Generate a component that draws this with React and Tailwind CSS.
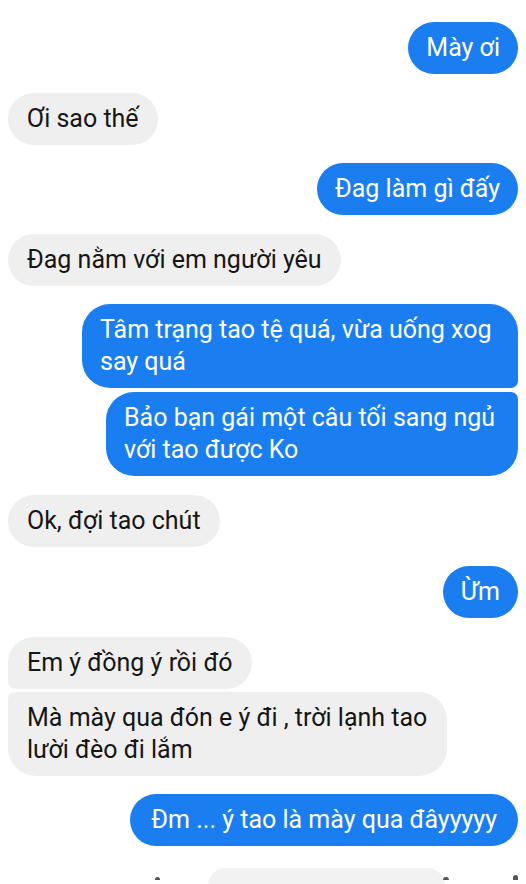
const font = { fontFamily: 'Roboto, "Noto Sans", sans-serif' };

function Sent({ children, className = '', mt = 'mt-[19px]' }) {
  return (
    <div className={`flex justify-end ${mt}`}>
      <div
        className={`bg-[#1b7ef0] text-white text-[25px] leading-[32px] py-[10px] px-[18px] ${className}`}
      >
        {children}
      </div>
    </div>
  );
}

function Received({ children, className = '', mt = 'mt-[19px]' }) {
  return (
    <div className={`flex justify-start ${mt}`}>
      <div
        className={`bg-[#efefef] text-[#161616] text-[25px] leading-[32px] py-[10px] px-[19px] ${className}`}
      >
        {children}
      </div>
    </div>
  );
}

export default function App() {
  return (
    <div className="w-[526px] h-[884px] overflow-hidden bg-white px-2 pt-[22px]" style={font}>
      <Sent mt="mt-0" className="rounded-[26px] px-[17px]">Mày ơi</Sent>
      <Received className="rounded-[26px]">Ơi sao thế</Received>
      <Sent mt="mt-[18px]" className="rounded-[26px]">Đag làm gì đấy</Sent>
      <Received className="rounded-[26px]">Đag nằm với em người yêu</Received>

      <Sent mt="mt-[18px]" className="w-[436px] rounded-[28px] rounded-br-[7px]">
        Tâm trạng tao tệ quá, vừa uống xog
        <br />
        say quá
      </Sent>
      <Sent mt="mt-[4px]" className="w-[412px] rounded-[28px] rounded-tr-[7px]">
        Bảo bạn gái một câu tối sang ngủ
        <br />
        với tao được Ko
      </Sent>

      <Received className="rounded-[26px]">Ok, đợi tao chút</Received>
      <Sent className="rounded-[26px] px-[17px]">Ừm</Sent>

      <Received className="rounded-[26px] rounded-bl-[7px]">Em ý đồng ý rồi đó</Received>
      <Received mt="mt-[3px]" className="w-[439px] rounded-[28px] rounded-tl-[7px]">
        Mà mày qua đón e ý đi , trời lạnh tao
        <br />
        lười đèo đi lắm
      </Received>

      <Sent mt="mt-[18px]" className="rounded-[26px] px-[21px]">Đm ... ý tao là mày qua đâyyyyy</Sent>

      {/* cut-off input row */}
      <div className="mt-[22px] flex items-start">
        <div className="ml-[147px] mt-[9px] w-[5px] h-[3px] rounded-t-full bg-[#555]" />
        <div className="ml-[48px] w-[237px] h-[30px] rounded-t-[18px] bg-[#f2f2f2]" />
        <div className="ml-[-2px] mt-[9px] w-[6px] h-[3px] rounded-t-full bg-[#555]" />
        <div className="ml-[64px] mt-[7px] w-[5px] h-[5px] rounded-t-full bg-[#555]" />
      </div>
    </div>
  );
}
